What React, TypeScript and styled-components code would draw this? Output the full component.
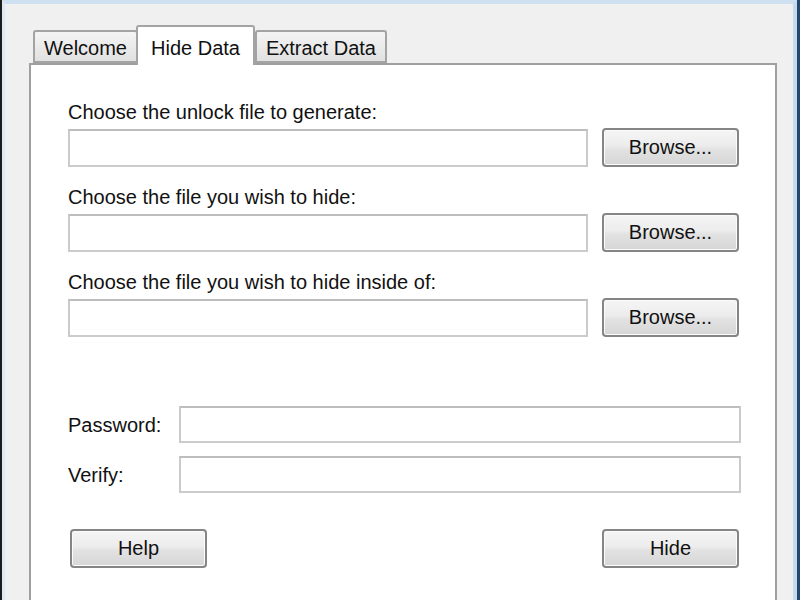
import React from 'react'
import styled, { createGlobalStyle } from 'styled-components'

const GlobalStyle = createGlobalStyle`
  html, body {
    margin: 0;
    padding: 0;
    background: #f0f0f0;
  }
  * {
    box-sizing: border-box;
  }
  body {
    font-family: "Liberation Sans", Arial, sans-serif;
    font-size: 20px;
    color: #111;
  }
`

type TabProps = {
  label: string
  active?: boolean
}

const fileRows = [
  'Choose the unlock file to generate:',
  'Choose the file you wish to hide:',
  'Choose the file you wish to hide inside of:',
]

const Tab = ({ label, active }: TabProps) => (
  <TabButton $active={active}>{label}</TabButton>
)

const App = () => (
  <>
    <GlobalStyle />
    <Window>
      <Frame>
        <TabStrip>
          <Tab label="Welcome" />
          <Tab label="Hide Data" active />
          <Tab label="Extract Data" />
        </TabStrip>
        <Panel>
          {fileRows.map((text) => (
            <FileGroup key={text}>
              <Label>{text}</Label>
              <FileRow>
                <TextBox />
                <Button $width={137}>Browse...</Button>
              </FileRow>
            </FileGroup>
          ))}
          <PasswordGrid>
            <Label>Password:</Label>
            <TextBox type="password" $height={37} />
            <Label>Verify:</Label>
            <TextBox type="password" $height={37} />
          </PasswordGrid>
          <ActionRow>
            <Button $width={137}>Help</Button>
            <Button $width={137}>Hide</Button>
          </ActionRow>
        </Panel>
      </Frame>
    </Window>
  </>
)

const Window = styled.div`
  width: 800px;
  height: 600px;
  overflow: hidden;
  display: flex;
  border-left: 2px solid #1c1c1c;
  border-right: 3px solid #24476b;
`

const Frame = styled.div`
  flex: 1;
  display: flex;
  flex-direction: column;
  background: #f0f0f0;
  border-left: 3px solid #dfe9f4;
  border-top: 4px solid #cfe0f1;
  border-right: 4px solid #c4daef;
  padding: 21px 16px 0 24px;
`

const TabStrip = styled.div`
  display: flex;
  align-items: flex-end;
  height: 38px;
  padding-left: 4px;
`

const TabButton = styled.div<{ $active?: boolean }>`
  position: relative;
  z-index: ${(p) => (p.$active ? 2 : 1)};
  height: ${(p) => (p.$active ? '40px' : '33px')};
  margin-bottom: ${(p) => (p.$active ? '-2px' : '0')};
  margin-left: ${(p) => (p.$active ? '-2px' : '0')};
  padding: ${(p) => (p.$active ? '4px 13px 0' : '3px 9px 0')};
  display: flex;
  align-items: center;
  border: 2px solid #a3a3a3;
  border-bottom: ${(p) => (p.$active ? 'none' : '2px solid #a3a3a3')};
  border-radius: 3px 3px 0 0;
  background: ${(p) =>
    p.$active ? '#ffffff' : 'linear-gradient(#f4f4f4, #e1e1e1)'};
  line-height: 24px;
  white-space: nowrap;
`

const Panel = styled.div`
  flex: 1;
  display: flex;
  flex-direction: column;
  background: #ffffff;
  border: 2px solid #9f9f9f;
  border-bottom: none;
  padding: 35px 34px 0 37px;
`

const FileGroup = styled.div`
  display: flex;
  flex-direction: column;
  gap: 4px;
  margin-bottom: 18px;
`

const Label = styled.div`
  line-height: 24px;
  white-space: nowrap;
  align-self: center;
  justify-self: start;
  ${FileGroup} & {
    align-self: flex-start;
  }
`

const FileRow = styled.div`
  display: flex;
  align-items: center;
  gap: 14px;
  margin-right: 2px;
`

const TextBox = styled.input<{ $height?: number }>`
  flex: 1;
  min-width: 0;
  height: ${(p) => p.$height || 38}px;
  border: 2px solid #cbcbcb;
  border-top-color: #bdbdbd;
  background: #fff;
  outline: none;
  font: inherit;
  padding: 0 6px;
`

const Button = styled.button<{ $width: number }>`
  width: ${(p) => p.$width}px;
  height: 39px;
  flex: none;
  border: 2px solid #858585;
  border-radius: 4px;
  background: linear-gradient(#f5f5f5 0%, #ececec 45%, #e2e2e2 55%, #d6d6d6 100%);
  box-shadow: inset 0 0 0 1px #fbfbfb;
  font: inherit;
  color: #111;
  padding: 0;
`

const PasswordGrid = styled.div`
  display: grid;
  grid-template-columns: 111px 1fr;
  row-gap: 13px;
  margin-top: 51px;
`

const ActionRow = styled.div`
  display: flex;
  justify-content: space-between;
  margin: 36px 2px 0 2px;
`

export default App
